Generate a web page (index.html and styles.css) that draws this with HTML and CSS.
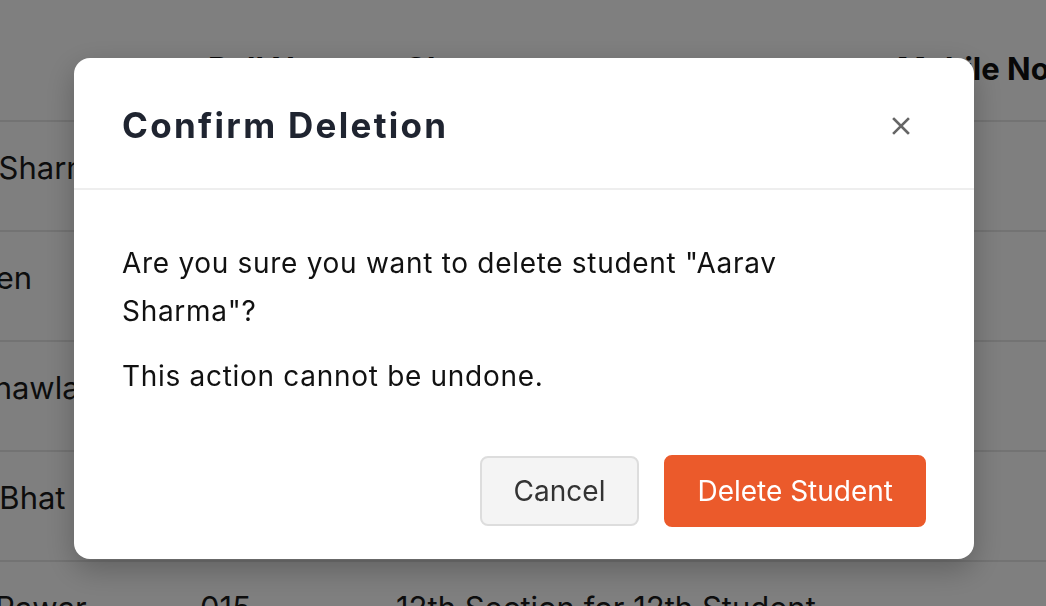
FILE: index.html
```html
<!DOCTYPE html>
<html lang="en">
<head>
<meta charset="utf-8">
<title>Students</title>
<link rel="stylesheet" href="styles.css">
</head>
<body>
<div class="page">
  <div class="table">
    <div class="row head">
      <div class="cell first">Name</div>
      <div class="cell">Roll No.</div>
      <div class="cell">Class</div>
      <div class="cell">Mobile No.</div>
    </div>
    <div class="row">
      <div class="cell">Aarav Sharma</div>
      <div class="cell">011</div>
      <div class="cell"></div>
      <div class="cell"></div>
    </div>
    <div class="row">
      <div class="cell">Riya Sen</div>
      <div class="cell">012</div>
      <div class="cell"></div>
      <div class="cell"></div>
    </div>
    <div class="row">
      <div class="cell">Dev Chawla</div>
      <div class="cell">013</div>
      <div class="cell"></div>
      <div class="cell"></div>
    </div>
    <div class="row">
      <div class="cell">Karan Bhat</div>
      <div class="cell">014</div>
      <div class="cell"></div>
      <div class="cell"></div>
    </div>
    <div class="row">
      <div class="cell">Rahul Pawar</div>
      <div class="cell">015</div>
      <div class="cell">12th Section for 12th Student</div>
      <div class="cell"></div>
    </div>
  </div>
</div>

<div class="overlay">
  <div class="modal" role="dialog" aria-labelledby="modal-title">
    <div class="modal-header">
      <h2 class="modal-title" id="modal-title">Confirm Deletion</h2>
      <button class="close-btn" aria-label="Close">
        <svg width="18" height="18" viewBox="0 0 18 18" aria-hidden="true">
          <path d="M2 2 L16 16 M16 2 L2 16" stroke="#666" stroke-width="2.6" stroke-linecap="square" fill="none"/>
        </svg>
      </button>
    </div>
    <div class="modal-body">
      <p class="msg">Are you sure you want to delete student "Aarav Sharma"?</p>
      <p class="msg">This action cannot be undone.</p>
    </div>
    <div class="modal-footer">
      <button class="btn btn-cancel">Cancel</button>
      <button class="btn btn-danger">Delete Student</button>
    </div>
  </div>
</div>
</body>
</html>
```

FILE: styles.css
```css
* { box-sizing: border-box; }

html, body {
  margin: 0;
  padding: 0;
  width: 100%;
  height: 100%;
  overflow: hidden;
  background: #ffffff;
  font-family: Inter, "Noto Sans", "Liberation Sans", sans-serif;
  color: #1a1a1a;
}

.page {
  width: 100%;
  height: 100%;
  overflow: hidden;
}

.table {
  width: 1400px;
  margin-left: -95px;
  font-size: 31px;
}

.row {
  display: grid;
  grid-template-columns: 295px 196px 493px 1fr;
  height: 110px;
  border-bottom: 2px solid #e6e6e6;
  padding-top: 26px;
  line-height: 40px;
  white-space: nowrap;
}

.row.head {
  height: 122px;
  padding-top: 49px;
  font-weight: 700;
  color: #111;
}

.row.head .cell { padding-left: 8px; }
.row.head .cell.first { padding-left: 0; }

.overlay {
  position: fixed;
  inset: 0;
  background: rgba(0, 0, 0, 0.5);
  display: flex;
  justify-content: center;
  align-items: flex-start;
  padding: 58px 0 0 2px;
}

.modal {
  width: 900px;
  background: #ffffff;
  border-radius: 16px;
  box-shadow: 0 10px 30px rgba(0, 0, 0, 0.25);
  overflow: hidden;
}

.modal-header {
  height: 132px;
  display: flex;
  align-items: center;
  justify-content: space-between;
  padding: 0 64px 0 48px;
  border-bottom: 2px solid #eeeeee;
}

.modal-title {
  margin: 0;
  font-size: 35px;
  font-weight: 700;
  letter-spacing: 2.3px;
  color: #1f2430;
  line-height: 48px;
  padding-top: 4px;
}

.close-btn {
  border: 0;
  background: transparent;
  padding: 0;
  width: 18px;
  height: 18px;
  margin-top: 5px;
  display: flex;
  cursor: pointer;
}

.modal-body {
  padding: 49px 64px 0 48px;
}

.msg {
  margin: 0 0 17px;
  font-size: 28px;
  letter-spacing: 0.7px;
  line-height: 48px;
  color: #111;
}

.msg:last-child { margin-bottom: 0; }

.modal-footer {
  display: flex;
  justify-content: flex-end;
  gap: 25px;
  padding: 55px 48px 32px;
}

.btn {
  height: 72px;
  padding: 0 31px;
  border-radius: 8px;
  font-family: inherit;
  font-size: 28px;
  border: 2px solid transparent;
  cursor: pointer;
}

.btn-cancel {
  background: #f4f4f4;
  border-color: #dddddd;
  color: #333333;
  padding: 0 32px;
  height: 70px;
  margin-top: 1px;
}

.btn-danger {
  background: #eb5a2b;
  border-color: #eb5a2b;
  color: #ffffff;
}
```
